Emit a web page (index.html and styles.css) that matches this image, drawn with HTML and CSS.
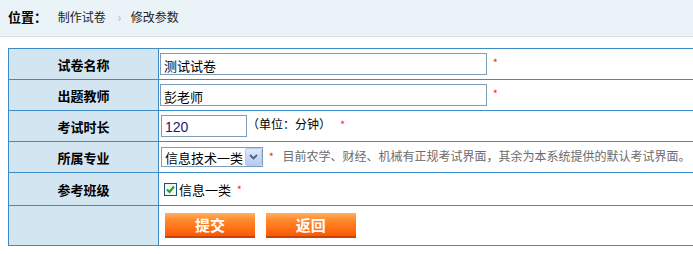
FILE: index.html
```html
<!DOCTYPE html>
<html lang="zh-CN">
<head>
    <meta charset="UTF-8">
    <title>修改参数</title>
    <link rel="stylesheet" href="styles.css">
</head>
<body>
    <div class="place">
        <span class="place-title">位置：</span>
        <span class="crumb">制作试卷</span>
        <span class="sep">›</span>
        <span class="crumb">修改参数</span>
    </div>

    <form class="exam-form">
        <table class="form-table">
            <tbody>
                <tr>
                    <th>试卷名称</th>
                    <td><input type="text" class="text-input wide" value="测试试卷"> <span class="star">*</span></td>
                </tr>
                <tr>
                    <th>出题教师</th>
                    <td><input type="text" class="text-input wide" value="彭老师"> <span class="star">*</span></td>
                </tr>
                <tr>
                    <th>考试时长</th>
                    <td><input type="text" class="text-input short" value="120"><span class="unit">（单位：分钟）</span><span class="star">*</span></td>
                </tr>
                <tr>
                    <th>所属专业</th>
                    <td>
                        <span class="select-box">
                            <select class="select">
                                <option>信息技术一类</option>
                            </select>
                            <span class="select-btn">
                                <svg width="9" height="6" viewBox="0 0 9 6"><path d="M1 1 L4.5 4.5 L8 1" fill="none" stroke="#4d6185" stroke-width="1.8"/></svg>
                            </span>
                        </span>
                        <span class="star">*</span>
                        <span class="hint">目前农学、财经、机械有正规考试界面，其余为本系统提供的默认考试界面。</span>
                    </td>
                </tr>
                <tr class="tall">
                    <th>参考班级</th>
                    <td>
                        <label class="check">
                            <span class="check-box">
                                <svg width="9" height="9" viewBox="0 0 9 9"><path d="M1 4.5 L3.5 7 L8 1.5" fill="none" stroke="#21a121" stroke-width="2"/></svg>
                            </span>
                            信息一类
                        </label>
                        <span class="star">*</span>
                    </td>
                </tr>
                <tr class="buttons">
                    <th></th>
                    <td>
                        <button type="submit" class="btn">提交</button>
                        <button type="button" class="btn">返回</button>
                    </td>
                </tr>
            </tbody>
        </table>
    </form>
</body>
</html>
```

FILE: styles.css
```css
body {
    font-family: "Noto Sans CJK SC", "Liberation Sans", sans-serif;
    font-size: 12px;
    color: #000;
    background-color: #fff;
    margin: 0;
    padding: 0;
    overflow: hidden;
}

.place {
    height: 36px;
    line-height: 34px;
    padding-left: 8px;
    background-color: #eaf3f7;
    border-bottom: 1px solid #d5e2e9;
    color: #222;
}

.place-title {
    font-weight: bold;
    font-size: 13px;
    color: #000;
    margin-right: 8px;
}

.sep {
    color: #b0b0b0;
    margin: 0 7px 0 9px;
}

.exam-form {
    margin: 11px 0 0 8px;
}

.form-table {
    width: 740px;
    border-collapse: collapse;
}

.form-table th,
.form-table td {
    border: 1px solid #3b8cc8;
    height: 30px;
    padding: 0;
    vertical-align: middle;
}

.form-table th {
    width: 149px;
    background-color: #d3e5f1;
    font-weight: bold;
    font-size: 13px;
    text-align: center;
}

.form-table td {
    padding-left: 1px;
    white-space: nowrap;
}

.form-table tr.tall td,
.form-table tr.tall th {
    height: 32px;
}

.form-table tr.buttons td,
.form-table tr.buttons th {
    height: 39px;
}

.text-input {
    height: 22px;
    box-sizing: border-box;
    border: 1px solid #7f9db9;
    padding: 2px 3px 0;
    font-family: inherit;
    font-size: 13px;
    vertical-align: middle;
    margin: 0;
}

.wide {
    width: 327px;
}

.short {
    width: 86px;
    margin-left: 1px;
    font-family: "Liberation Sans", sans-serif;
    font-size: 14px;
    color: #1a1a6a;
}

.unit {
    margin: 0 6px 0 0;
}

.star {
    color: #ff1f3a;
    font-size: 11px;
    margin-left: 3px;
}

.select-box {
    position: relative;
    display: inline-block;
    vertical-align: middle;
    margin-left: 1px;
}

.select {
    appearance: none;
    width: 102px;
    height: 20px;
    box-sizing: border-box;
    border: 1px solid #7f9db9;
    padding: 0 0 0 3px;
    font-family: inherit;
    font-size: 13px;
    background: #fff;
    display: block;
}

.select-btn {
    position: absolute;
    right: 1px;
    top: 1px;
    width: 15px;
    height: 16px;
    border: 1px solid #b9c9ef;
    border-radius: 2px;
    background: linear-gradient(#dfe8fc, #b6c9f3);
    display: flex;
    align-items: center;
    justify-content: center;
}

.hint {
    color: #6b6b6b;
    margin-left: 6px;
}

.check {
    display: inline-flex;
    align-items: center;
    gap: 2px;
    margin-left: 4px;
    font-size: 13px;
}

.check-box {
    width: 11px;
    height: 11px;
    border: 1px solid #1c5180;
    background: #f4f4f0;
    display: inline-flex;
    align-items: center;
    justify-content: center;
}

.buttons td {
    padding-left: 6px;
}

.btn {
    width: 90px;
    height: 25px;
    border: none;
    border-bottom: 2px solid #d04000;
    background: linear-gradient(#ffb060 0%, #ff8a2c 30%, #ff6a12 75%, #f65a08 100%);
    color: #fff;
    font-family: inherit;
    font-weight: bold;
    font-size: 15px;
    padding: 0;
    margin-right: 8px;
    cursor: pointer;
    vertical-align: middle;
}
```
